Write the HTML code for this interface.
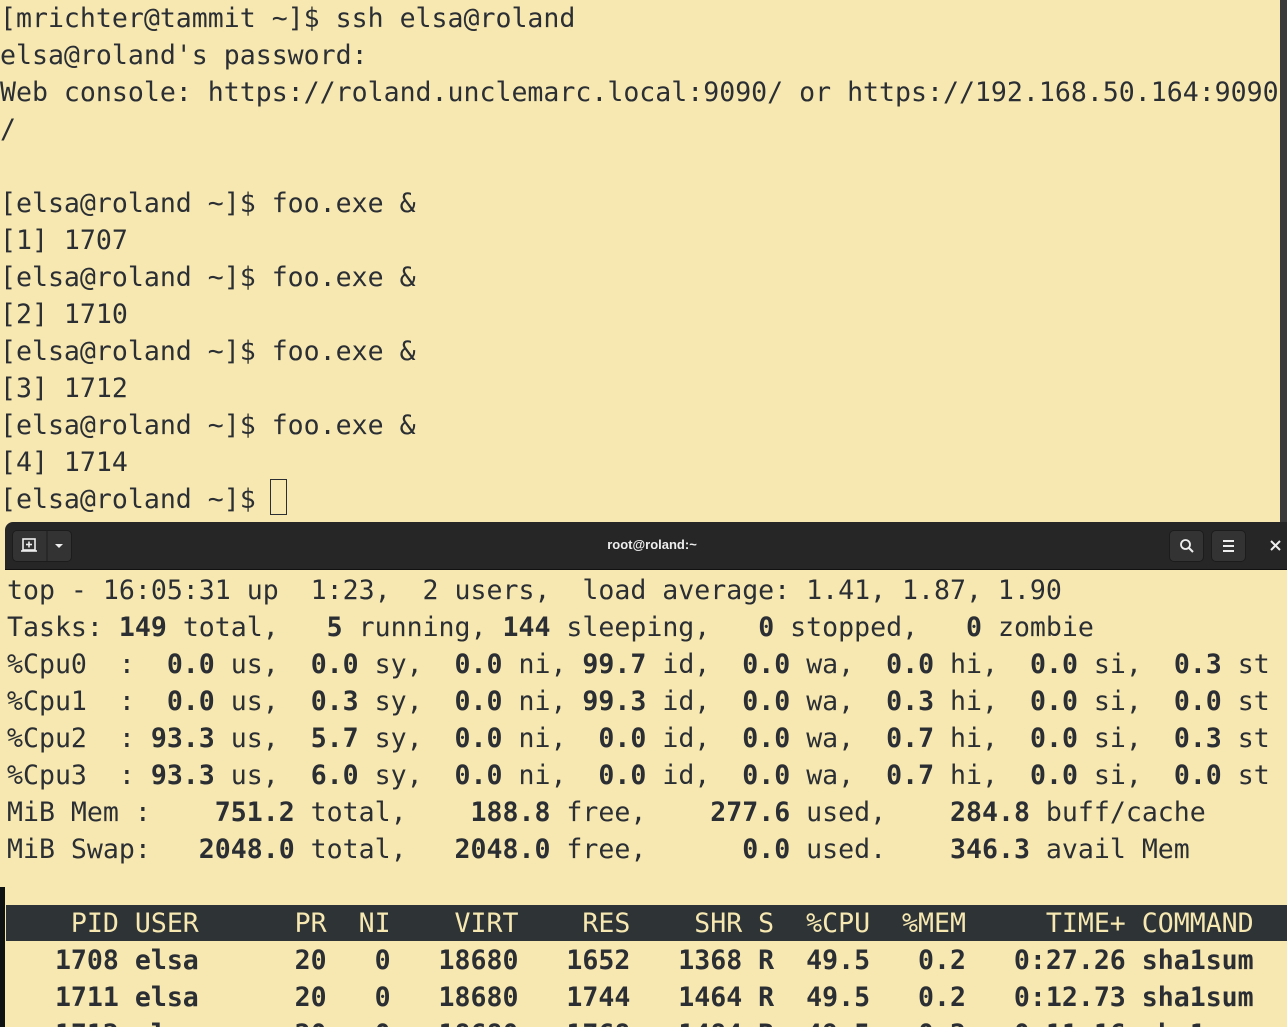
<!DOCTYPE html>
<html><head><meta charset="utf-8"><style>
html,body{margin:0;padding:0;width:1287px;height:1027px;overflow:hidden;background:#f7e8b2;position:relative;}
.t{position:absolute;font-family:"DejaVu Sans Mono","Liberation Mono",monospace;font-size:26.56px;line-height:37px;white-space:pre;color:#2b2f33;}
b{font-weight:bold;}
#top{left:0;top:-0.5px;}
#sb{position:absolute;left:1280px;top:0;width:7px;height:522px;background:#3a3a3a;}
#cur{position:absolute;left:270px;top:479px;width:17px;height:36px;border:1px solid #2b2f33;box-sizing:border-box;}
#leftdark{position:absolute;left:0;top:887px;width:5px;height:140px;background:#0e1213;}
#win{position:absolute;left:5px;top:522px;width:1282px;height:505px;background:#f7e8b2;overflow:hidden;}
#tb{position:absolute;left:0;top:0;width:100%;height:47px;background:#262626;border-radius:8px 0 0 0;border-bottom:1px solid #111;}
.btn{position:absolute;top:8px;height:32px;background:#333;border-radius:5px;border:1px solid #1c1c1c;box-sizing:border-box;}
#title{position:absolute;left:0;width:1294px;text-align:center;top:15px;color:#eee;font:bold 13px "Liberation Sans",sans-serif;}
#bot{left:2px;top:49.5px;}
#hdr{position:absolute;left:1px;top:383px;width:1290px;height:36px;background:#2e3436;}
.h{color:#f7e8b2;}
</style></head><body>
<div class="t" id="top">[mrichter@tammit ~]$ ssh elsa@roland
elsa@roland's password:
Web console: https://roland.unclemarc.local:9090/ or https://192.168.50.164:9090
/

[elsa@roland ~]$ foo.exe &amp;
[1] 1707
[elsa@roland ~]$ foo.exe &amp;
[2] 1710
[elsa@roland ~]$ foo.exe &amp;
[3] 1712
[elsa@roland ~]$ foo.exe &amp;
[4] 1714
[elsa@roland ~]$ </div>
<div id="cur"></div>
<div id="sb"></div>
<div id="leftdark"></div>
<div id="win">
 <div id="tb">
  <div class="btn" style="left:7px;width:60px;">
   <svg width="60" height="30" style="position:absolute;left:0;top:0">
    <rect x="10" y="8" width="12" height="11" fill="none" stroke="#eee" stroke-width="1.6"/>
    <line x1="8" y1="20" x2="24" y2="20" stroke="#eee" stroke-width="1.6"/>
    <line x1="16" y1="10.5" x2="16" y2="16.5" stroke="#eee" stroke-width="1.6"/>
    <line x1="13" y1="13.5" x2="19" y2="13.5" stroke="#eee" stroke-width="1.6"/>
    <line x1="34" y1="0" x2="34" y2="32" stroke="#1c1c1c" stroke-width="1"/>
    <path d="M42 13 L50 13 L46 17 Z" fill="#eee"/>
   </svg>
  </div>
  <div id="title">root@roland:~</div>
  <div class="btn" style="left:1164px;width:35px;">
   <svg width="35" height="30" style="position:absolute;left:0;top:0"><circle cx="15.5" cy="13.5" r="4.5" fill="none" stroke="#eee" stroke-width="1.8"/><line x1="19" y1="17" x2="23" y2="21" stroke="#eee" stroke-width="2"/></svg>
  </div>
  <div class="btn" style="left:1206px;width:35px;">
   <svg width="35" height="30" style="position:absolute;left:0;top:0"><rect x="11" y="9" width="11" height="2" fill="#eee"/><rect x="11" y="14" width="11" height="2" fill="#eee"/><rect x="11" y="19" width="11" height="2" fill="#eee"/></svg>
  </div>
  <svg width="20" height="20" style="position:absolute;left:1261px;top:14px"><path d="M5 5 L14 14 M14 5 L5 14" stroke="#eee" stroke-width="2"/></svg>
 </div>
 <div id="hdr"></div>
 <div class="t" id="bot">top - 16:05:31 up  1:23,  2 users,  load average: 1.41, 1.87, 1.90
Tasks: <b>149</b> total,   <b>5</b> running, <b>144</b> sleeping,   <b>0</b> stopped,   <b>0</b> zombie
%Cpu0  :  <b>0.0</b> us,  <b>0.0</b> sy,  <b>0.0</b> ni, <b>99.7</b> id,  <b>0.0</b> wa,  <b>0.0</b> hi,  <b>0.0</b> si,  <b>0.3</b> st
%Cpu1  :  <b>0.0</b> us,  <b>0.3</b> sy,  <b>0.0</b> ni, <b>99.3</b> id,  <b>0.0</b> wa,  <b>0.3</b> hi,  <b>0.0</b> si,  <b>0.0</b> st
%Cpu2  : <b>93.3</b> us,  <b>5.7</b> sy,  <b>0.0</b> ni,  <b>0.0</b> id,  <b>0.0</b> wa,  <b>0.7</b> hi,  <b>0.0</b> si,  <b>0.3</b> st
%Cpu3  : <b>93.3</b> us,  <b>6.0</b> sy,  <b>0.0</b> ni,  <b>0.0</b> id,  <b>0.0</b> wa,  <b>0.7</b> hi,  <b>0.0</b> si,  <b>0.0</b> st
MiB Mem :    <b>751.2</b> total,    <b>188.8</b> free,    <b>277.6</b> used,    <b>284.8</b> buff/cache
MiB Swap:   <b>2048.0</b> total,   <b>2048.0</b> free,      <b>0.0</b> used.    <b>346.3</b> avail Mem

<span class="h">    PID USER      PR  NI    VIRT    RES    SHR S  %CPU  %MEM     TIME+ COMMAND</span>
<b>   1708 elsa      20   0   18680   1652   1368 R  49.5   0.2   0:27.26 sha1sum</b>
<b>   1711 elsa      20   0   18680   1744   1464 R  49.5   0.2   0:12.73 sha1sum</b>
<b>   1712 elsa      20   0   18680   1768   1484 R  49.5   0.2   0:11.16 sha1sum</b></div>
</div>
</body></html>
